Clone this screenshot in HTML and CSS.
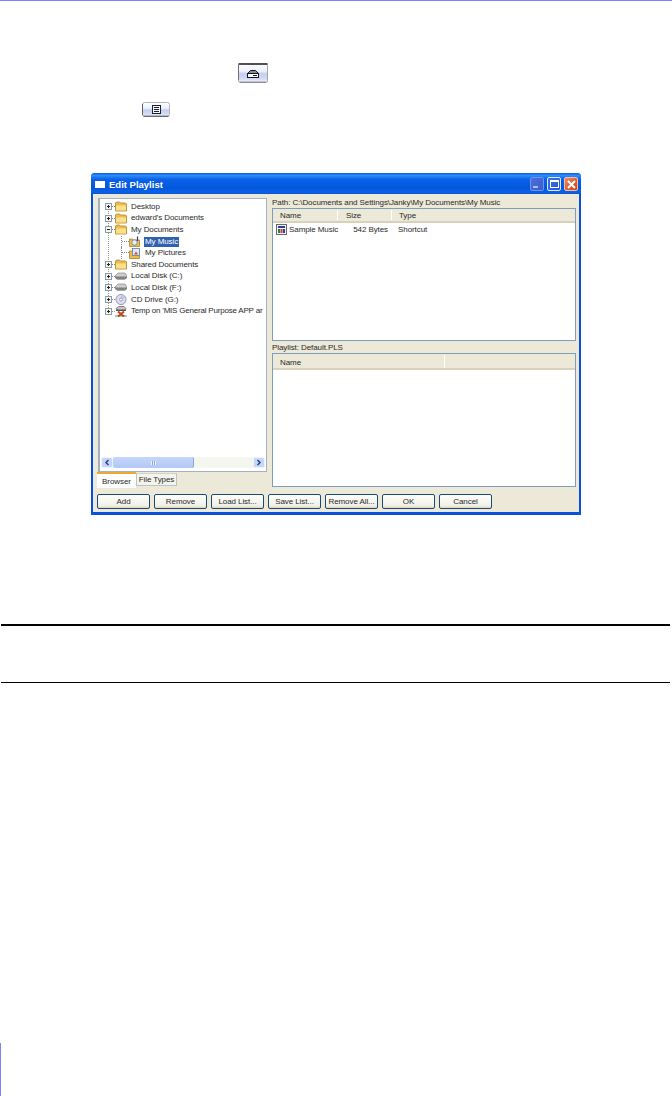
FILE: index.html
```html
<!DOCTYPE html>
<html lang="en">
<head>
    <meta charset="UTF-8">
    <meta name="viewport" content="width=device-width, initial-scale=1.0">
    <title>Edit Playlist</title>
    <link rel="stylesheet" href="styles.css">
</head>
<body>

    <!-- shared icons -->
    <svg class="defs" width="0" height="0">
        <defs>
            <linearGradient id="key-fill" x1="0" y1="0" x2="0" y2="1">
                <stop offset="0" stop-color="#ffffff"/>
                <stop offset="0.4" stop-color="#eef1fb"/>
                <stop offset="0.55" stop-color="#c2cdf0"/>
                <stop offset="0.8" stop-color="#d2daf4"/>
                <stop offset="1" stop-color="#f4f5fb"/>
            </linearGradient>
            <symbol id="expand" viewBox="0 0 10 7">
                <path d="M7 3.500h3" stroke="#8a8a8a" stroke-dasharray="1 1" fill="none"/>
                <rect x="0.500" y="0.500" width="6" height="6" fill="#f4f4f0" stroke="#8a9aa8"/>
                <path d="M2 3.500h3M3.500 2v3" stroke="#222" fill="none"/>
            </symbol>
            <symbol id="collapse" viewBox="0 0 10 7">
                <path d="M7 3.500h3" stroke="#8a8a8a" stroke-dasharray="1 1" fill="none"/>
                <rect x="0.500" y="0.500" width="6" height="6" fill="#f4f4f0" stroke="#8a9aa8"/>
                <path d="M2 3.500h3" stroke="#222" fill="none"/>
            </symbol>
            <symbol id="folder" viewBox="0 0 12 11">
                <path d="M0.500 3V2l1-1h3l1 1h5l1 1v7h-11z" fill="#eebc4a" stroke="#a9842e" stroke-width="0.8"/>
                <path d="M1 4.500h10v5H1z" fill="#fbe08a"/>
            </symbol>
            <symbol id="music" viewBox="0 0 12 11">
                <path d="M0.500 4V3h3l1 1h6v6.500h-10z" fill="#eebc4a" stroke="#a9842e" stroke-width="0.8"/>
                <circle cx="5.500" cy="6.500" r="2.700" fill="#e8eefa" stroke="#5a6a9a" stroke-width="0.7"/>
                <path d="M8.500 0.500v4.500" stroke="#2a3a8a" stroke-width="1.200"/>
            </symbol>
            <symbol id="pictures" viewBox="0 0 12 11">
                <path d="M0.500 4V3h3l1 1h6v6.500h-10z" fill="#eebc4a" stroke="#a9842e" stroke-width="0.8"/>
                <rect x="3.500" y="0.500" width="7" height="7" fill="#dfe8f8" stroke="#5a6a9a" stroke-width="0.7"/>
                <path d="M5 6.500l2-3 2 3z" fill="#c05a3a"/>
            </symbol>
            <symbol id="disk" viewBox="0 0 12 11">
                <path d="M0 5l3-3h7l2 3-2 3H2z" fill="#cfcfcf" stroke="#777" stroke-width="0.6"/>
                <path d="M0 5.500h12V7l-2 1.500H2L0 7z" fill="#808080"/>
                <path d="M8.500 7h1.500" stroke="#56c056"/>
            </symbol>
            <symbol id="cd" viewBox="0 0 13 13">
                <circle cx="6.500" cy="6.500" r="6" fill="#dedcf2" stroke="#6e6e92" stroke-width="0.8"/>
                <path d="M6.500 1a5.500 5.500 0 0 1 5 3.500L6.500 6.500z" fill="#b8ccf0"/>
                <circle cx="6.500" cy="6.500" r="1.700" fill="#fff" stroke="#6e6e92" stroke-width="0.7"/>
            </symbol>
            <symbol id="share" viewBox="0 0 12 11">
                <path d="M1 2.500l3-2h5l2 2-2 2H3z" fill="#c8c8c8" stroke="#555" stroke-width="0.7"/>
                <path d="M1 3.500h10v1.500H1z" fill="#555"/>
                <path d="M3 5.500l6 5M9 5.500l-6 5" stroke="#d0401c" stroke-width="2"/>
                <path d="M0 10h12" stroke="#3c7a3c" stroke-width="0.8"/>
            </symbol>
            <symbol id="shortcut" viewBox="0 0 11 11">
                <rect x="0.500" y="0.500" width="10" height="10" fill="#f4f4f4" stroke="#667"/>
                <rect x="2" y="2" width="7" height="2" fill="#2a3f9a"/>
                <rect x="2" y="5" width="2" height="4" fill="#3a7a3a"/>
                <rect x="4.500" y="5" width="2" height="4" fill="#c03a3a"/>
                <rect x="7" y="5" width="2" height="4" fill="#2a3f9a"/>
            </symbol>
        </defs>
    </svg>

    <div class="page">
        <div class="top-rule"></div>

        <!-- remote keys in the text -->
        <svg class="key key-eject" width="30" height="20" viewBox="0 0 30 20">
            <rect x="0.500" y="0.500" width="29" height="19" rx="2" fill="url(#key-fill)" stroke="#a4a4b0"/>
            <path d="M0.500 1h29" stroke="#505056" stroke-width="2"/>
            <path d="M0.500 2v15" stroke="#707078"/>
            <path d="M2 19.300h26" stroke="#8a8a98" stroke-width="1.400"/>
            <path d="M9.500 13.500v-3l3-3h5l3 3v3z" fill="#8a8a92" stroke="#15151f"/>
            <rect x="9.500" y="10.500" width="11" height="4" fill="#fff" stroke="#15151f"/>
            <path d="M15 12.500h4" stroke="#15151f"/>
        </svg>
        <svg class="key key-menu" width="28" height="15" viewBox="0 0 28 15">
            <rect x="0.500" y="0.500" width="27" height="14" rx="2" fill="url(#key-fill)" stroke="#b4b4c0"/>
            <path d="M0.500 2v11" stroke="#606068"/>
            <path d="M1.500 14.300h25" stroke="#6a6a78" stroke-width="1.400"/>
            <rect x="10.500" y="3.500" width="8" height="8" fill="#f2f4fb" stroke="#20202c"/>
            <path d="M12 5.500h5M12 7.500h5M12 9.500h5" stroke="#20202c"/>
        </svg>

        <!-- dialog screenshot -->
        <div class="window">
            <div class="titlebar">
                <span class="title-icon"></span>
                <span class="title-text">Edit Playlist</span>
                <div class="title-buttons">
                    <span class="title-btn minimize"><i class="glyph-min"></i></span>
                    <span class="title-btn"><i class="glyph-max"></i></span>
                    <span class="title-btn close">
                        <svg width="9" height="9" viewBox="0 0 9 9"><path d="M1 1l7 7M8 1L1 8" stroke="#fff" stroke-width="2"/></svg>
                    </span>
                </div>
            </div>

            <div class="client">
                <div class="main">
                    <div class="left-col">
                        <div class="tree">
                            <ul class="tree-list">
                                <li class="tree-row"><svg class="exp"><use href="#expand"/></svg><svg class="ico"><use href="#folder"/></svg><span>Desktop</span></li>
                                <li class="tree-row"><svg class="exp"><use href="#expand"/></svg><svg class="ico"><use href="#folder"/></svg><span>edward's Documents</span></li>
                                <li class="tree-row"><svg class="exp"><use href="#collapse"/></svg><svg class="ico"><use href="#folder"/></svg><span>My Documents</span></li>
                                <li class="tree-row child"><i class="branch"></i><svg class="ico"><use href="#music"/></svg><span class="selected">My Music</span></li>
                                <li class="tree-row child"><i class="branch"></i><svg class="ico"><use href="#pictures"/></svg><span>My Pictures</span></li>
                                <li class="tree-row"><svg class="exp"><use href="#expand"/></svg><svg class="ico"><use href="#folder"/></svg><span>Shared Documents</span></li>
                                <li class="tree-row"><svg class="exp"><use href="#expand"/></svg><svg class="ico"><use href="#disk"/></svg><span>Local Disk (C:)</span></li>
                                <li class="tree-row"><svg class="exp"><use href="#expand"/></svg><svg class="ico"><use href="#disk"/></svg><span>Local Disk (F:)</span></li>
                                <li class="tree-row"><svg class="exp"><use href="#expand"/></svg><svg class="ico"><use href="#cd"/></svg><span>CD Drive (G:)</span></li>
                                <li class="tree-row long"><svg class="exp"><use href="#expand"/></svg><svg class="ico"><use href="#share"/></svg><span>Temp on 'MIS General Purpose APP ar</span></li>
                            </ul>
                            <div class="hscroll">
                                <span class="arrow">
                                    <svg width="6" height="7" viewBox="0 0 6 7"><path d="M4.500 1L2 3.500 4.500 6" stroke="#2a3f8a" stroke-width="1.500" fill="none"/></svg>
                                </span>
                                <span class="thumb"><i></i></span>
                                <span class="track"></span>
                                <span class="arrow">
                                    <svg width="6" height="7" viewBox="0 0 6 7"><path d="M1.500 1L4 3.500 1.500 6" stroke="#2a3f8a" stroke-width="1.500" fill="none"/></svg>
                                </span>
                            </div>
                        </div>
                        <div class="tabs">
                            <span class="tab active">Browser</span>
                            <span class="tab">File Types</span>
                        </div>
                    </div>

                    <div class="right-col">
                        <div class="list-label path-label">Path: C:\Documents and Settings\Janky\My Documents\My Music</div>
                        <div class="list list-top">
                            <div class="list-head">
                                <span class="col col-name">Name</span>
                                <span class="col col-size">Size</span>
                                <span class="col col-type">Type</span>
                            </div>
                            <div class="list-row">
                                <svg class="file-ico"><use href="#shortcut"/></svg>
                                <span class="cell-name">Sample Music</span>
                                <span class="cell-size">542 Bytes</span>
                                <span class="cell-type">Shortcut</span>
                            </div>
                        </div>
                        <div class="list-label playlist-label">Playlist: Default.PLS</div>
                        <div class="list list-bottom">
                            <div class="list-head">
                                <span class="col col-wide">Name</span>
                                <span class="col"></span>
                            </div>
                        </div>
                    </div>
                </div>

                <div class="actions">
                    <button>Add</button>
                    <button>Remove</button>
                    <button>Load List...</button>
                    <button>Save List...</button>
                    <button>Remove All...</button>
                    <button>OK</button>
                    <button>Cancel</button>
                </div>
            </div>
        </div>

        <div class="rule rule-thick"></div>
        <div class="rule rule-thin"></div>
        <div class="side-bar"></div>
    </div>

</body>
</html>
```

FILE: styles.css
```css
* {
    margin: 0;
    padding: 0;
    box-sizing: border-box;
}
body {
    background: #fff;
    font-family: 'Liberation Sans', Arial, sans-serif;
}
.defs { display: block; height: 0; }
.page { height: 1096px; overflow: hidden; }

.top-rule { height: 1px; background: #8080ff; }
.key { display: block; }
.key-eject { margin: 62px 0 0 238px; }
.key-menu { margin: 19px 0 0 142px; }

/* Window */
.window {
    width: 490px;
    height: 342px;
    margin: 56px 0 0 91px;
    background: #0a50dc;
    border-radius: 4px 4px 0 0;
    padding: 0 2px 3px 2px;
    display: flex;
    flex-direction: column;
}
.titlebar {
    height: 21px;
    margin: 0 -2px;
    padding: 1px 3px 0 4px;
    display: flex;
    align-items: center;
    background: linear-gradient(#0a5ae0, #2e8cf8 12%, #0a62e8 30%, #0457dc 70%, #0a62ea 92%, #0a4fc8);
    border-radius: 4px 4px 0 0;
}
.title-icon { width: 10px; height: 7px; background: #fff; margin-right: 4px; }
.title-text { color: #fff; font-size: 9.5px; font-weight: bold; }
.title-buttons { margin-left: auto; display: flex; gap: 3px; }
.title-btn {
    width: 14px;
    height: 14px;
    border: 1px solid #dfe8fb;
    border-radius: 2px;
    background: linear-gradient(135deg, #3f72e4, #2656d4);
    display: flex;
    align-items: center;
    justify-content: center;
}
.title-btn.minimize {
    border-color: #6f92ea;
    background: linear-gradient(135deg, #4a70dc, #3a5ccc);
}
.title-btn.close { background: linear-gradient(135deg, #ee8a60, #d03c14); border-color: #f0c0a8; }
.glyph-min { width: 5px; height: 2px; background: #a8bcf0; margin: 6px 3px 0 0; }
.glyph-max { width: 9px; height: 8px; border: 1px solid #fff; border-top-width: 2px; }

.client {
    flex: 1;
    background: #ece9d8;
    padding: 4px 2px 0 4px;
    font-size: 8px;
    letter-spacing: -0.08px;
    color: #2a2a2a;
}
.main { display: flex; height: 290px; }
.left-col { width: 170px; margin-right: 5px; display: flex; flex-direction: column; }

/* Tree */
.tree {
    height: 274px;
    margin-left: 1px;
    background: #fff;
    border: 1px solid #9fb2c4;
    border-left-width: 2px;
    display: flex;
    flex-direction: column;
}
.tree-list {
    list-style: none;
    flex: 1;
    padding: 2px 0 0 5px;
    overflow: hidden;
    background: repeating-linear-gradient(#999 0 1px, transparent 1px 2px) 8px 6px / 1px 104px no-repeat;
}
.tree-row {
    height: 11.6px;
    display: flex;
    align-items: center;
    white-space: nowrap;
}
.tree-row span { padding: 0 1px; line-height: 10px; }
.tree-row.long span { letter-spacing: -0.2px; }
.exp { width: 10px; height: 7px; flex: none; }
.ico { width: 12px; height: 11px; margin-right: 3px; flex: none; }
.tree-row.child { padding-left: 16px; }
.branch {
    width: 8px;
    height: 11.6px;
    flex: none;
    border-left: 1px dotted #8a8a8a;
    position: relative;
}
.branch::after {
    content: "";
    position: absolute;
    left: 0;
    top: 5px;
    width: 7px;
    border-top: 1px dotted #8a8a8a;
}
.selected { background: #2f62b0; color: #fff; }

.hscroll { height: 11px; margin-bottom: 3px; padding: 0 1px; display: flex; }
.arrow {
    width: 12px;
    background: #c6d6f8;
    border: 1px solid #eef3fe;
    border-radius: 2px;
    display: flex;
    align-items: center;
    justify-content: center;
}
.thumb {
    width: 81px;
    background: linear-gradient(#c4d6fa, #b4c8f6);
    border-right: 1px solid #8aa4dc;
    border-radius: 2px;
    display: flex;
    align-items: center;
    justify-content: center;
}
.thumb i { width: 5px; height: 4px; background: repeating-linear-gradient(90deg, #eef3fe 0 1px, #8aa4dc 1px 2px); }
.track { flex: 1; background: #f6f6f0; }

/* Tabs */
.tabs { display: flex; align-items: flex-start; }
.tab {
    width: 41px;
    height: 13px;
    margin-top: 1px;
    background: #f5f4ea;
    border: 1px solid #b9c3cc;
    border-top-color: #ccd2d8;
    text-align: center;
    line-height: 11px;
}
.tab.active {
    width: 39px;
    height: 16px;
    margin-top: 0;
    background: #fff;
    border: none;
    border-top: 2px solid #f0a830;
    line-height: 15px;
}

/* Lists */
.right-col { width: 304px; display: flex; flex-direction: column; }
.list-label { line-height: 10px; white-space: nowrap; overflow: hidden; }
.path-label { height: 10px; }
.playlist-label { height: 12px; padding-top: 2px; }
.list { background: #fff; border: 1px solid #7f9db9; }
.list-top { height: 133px; }
.list-bottom { height: 134px; }
.list-head {
    height: 14px;
    display: flex;
    background: #ece9d8;
    border-bottom: 2px solid #d6d2bc;
    line-height: 12px;
}
.list-bottom .list-head { height: 16px; line-height: 15px; }
.col { padding-left: 7px; border-right: 1px solid #fff; height: 10px; margin-top: 1px; }
.list-bottom .col { height: 13px; }
.col:last-child { border-right: none; flex: 1; }
.col-name { width: 65px; }
.col-size { width: 54px; padding-left: 8px; }
.col-type { padding-left: 7px; }
.col-wide { width: 172px; }

.list-row { display: flex; align-items: center; height: 13px; padding-left: 3px; white-space: nowrap; }
.file-ico { width: 11px; height: 11px; flex: none; margin-right: 2px; }
.cell-name { width: 60px; }
.cell-size { width: 39px; text-align: right; }
.cell-type { margin-left: 10px; }

/* Bottom buttons */
.actions { display: flex; gap: 4px; margin-top: 6px; }
.actions button {
    width: 53px;
    height: 15px;
    background: linear-gradient(#fdfdfa, #f2f1e7 80%, #dcd8c8);
    border: 1px solid #1c4a78;
    border-radius: 2px;
    font: 8px 'Liberation Sans', Arial, sans-serif;
    letter-spacing: -0.08px;
    color: #2a2a2a;
}

/* Rules at the foot of the page */
.rule { margin-left: 1px; width: 669px; background: #000; }
.rule-thick { height: 2px; margin-top: 109px; }
.rule-thin { height: 1px; margin-top: 56px; }
.side-bar { width: 1px; height: 53px; margin-top: 360px; background: #8080ff; }
```
